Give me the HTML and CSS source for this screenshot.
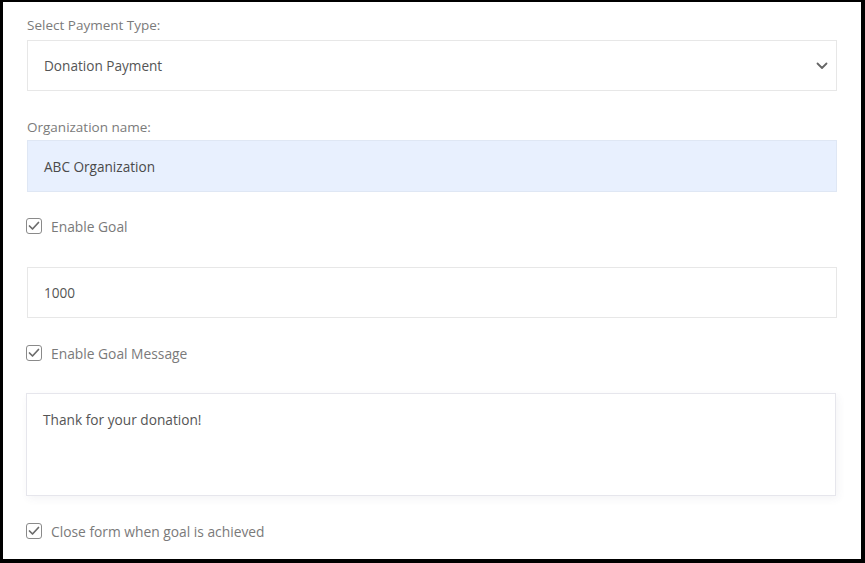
FILE: index.html
```html
<!DOCTYPE html>
<html>
<head>
<meta charset="utf-8">
<link rel="stylesheet" href="styles.css">
</head>
<body>
<div class="frame">
  <form class="form">
    <div class="field-label">Select Payment Type:</div>
    <div class="control select">
      <span>Donation Payment</span>
      <svg class="chev" width="12" height="8" viewBox="0 0 12 8"><path d="M1.5 1.5 L6 6 L10.5 1.5" fill="none" stroke="#666" stroke-width="1.8" stroke-linecap="round" stroke-linejoin="round"/></svg>
    </div>
    <div class="field-label second">Organization name:</div>
    <div class="control autofill">ABC Organization</div>
    <label class="check first-check"><span class="box"><svg width="12" height="10" viewBox="0 0 12 10"><path d="M1.5 5 L4.5 8 L10.5 1.5" fill="none" stroke="#6b6b6b" stroke-width="1.7" stroke-linecap="round" stroke-linejoin="round"/></svg></span>Enable Goal</label>
    <div class="control goal">1000</div>
    <label class="check"><span class="box"><svg width="12" height="10" viewBox="0 0 12 10"><path d="M1.5 5 L4.5 8 L10.5 1.5" fill="none" stroke="#6b6b6b" stroke-width="1.7" stroke-linecap="round" stroke-linejoin="round"/></svg></span>Enable Goal Message</label>
    <div class="textarea">Thank for your donation!</div>
    <label class="check"><span class="box"><svg width="12" height="10" viewBox="0 0 12 10"><path d="M1.5 5 L4.5 8 L10.5 1.5" fill="none" stroke="#6b6b6b" stroke-width="1.7" stroke-linecap="round" stroke-linejoin="round"/></svg></span>Close form when goal is achieved</label>
  </form>
</div>
</body>
</html>
```
FILE: styles.css
```css
* { box-sizing: border-box; }
html, body { margin: 0; padding: 0; background: #000; }
.frame {
  width: 865px;
  height: 563px;
  border-style: solid;
  border-color: #000;
  border-width: 2px 4px 4px 3px;
  background: #fff;
  font-family: "Open Sans", "Noto Sans", sans-serif;
  overflow: hidden;
}
.form {
  margin: 0;
  padding: 13px 24px 0 24px;
  display: flex;
  flex-direction: column;
}
.field-label {
  font-size: 13.5px;
  line-height: 20px;
  color: #7b7b7b;
  margin-bottom: 5px;
}
.field-label.second { margin-top: 26px; margin-bottom: 3px; }
.control {
  height: 51px;
  border: 1px solid #e7e7e7;
  display: flex;
  align-items: center;
  padding: 0 16px;
  font-size: 13.6px;
  color: #555;
}
.select { justify-content: space-between; padding-right: 8px; }
.chev { margin-right: 0; }
.autofill {
  height: 52px;
  background: #e8f0fe;
  border-color: #dfe7f4;
  color: #4a4a4a;
}
.goal { margin-top: 31px; }
.check {
  display: flex;
  align-items: center;
  height: 20px;
  margin-top: 25px;
  margin-left: -1px;
  font-size: 13.8px;
  color: #7a7a7a;
}
.first-check { margin-top: 24px; }
.box {
  width: 16px;
  height: 16px;
  border: 1.5px solid #8a8a8a;
  border-radius: 3px;
  display: flex;
  align-items: center;
  justify-content: center;
  margin-right: 9px;
  flex: none;
}
.textarea {
  margin-top: 30px;
  margin-left: -1px;
  margin-right: 1px;
  height: 103px;
  border: 1px solid #e6e6ec;
  box-shadow: 2px 3px 8px rgba(60, 60, 100, 0.06);
  padding: 16px 16px;
  font-size: 13.7px;
  line-height: 20px;
  color: #555;
}
```
